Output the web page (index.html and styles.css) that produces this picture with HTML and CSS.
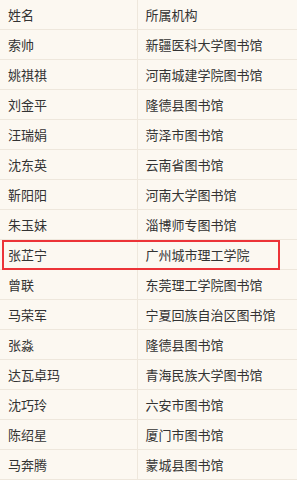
FILE: index.html
```html
<!DOCTYPE html>
<html lang="zh-CN">
<head>
    <meta charset="UTF-8">
    <meta name="viewport" content="width=device-width, initial-scale=1.0">
    <title>名单</title>
    <link rel="stylesheet" href="styles.css">
</head>
<body>
    <div class="list-wrap">
        <table class="list">
            <tr><td class="name">姓名</td><td>所属机构</td></tr>
            <tr><td class="name">索帅</td><td>新疆医科大学图书馆</td></tr>
            <tr><td class="name">姚祺祺</td><td>河南城建学院图书馆</td></tr>
            <tr><td class="name">刘金平</td><td>隆德县图书馆</td></tr>
            <tr><td class="name">汪瑞娟</td><td>菏泽市图书馆</td></tr>
            <tr><td class="name">沈东英</td><td>云南省图书馆</td></tr>
            <tr><td class="name">靳阳阳</td><td>河南大学图书馆</td></tr>
            <tr><td class="name">朱玉妹</td><td>淄博师专图书馆</td></tr>
            <tr><td class="name">张芷宁</td><td>广州城市理工学院</td></tr>
            <tr><td class="name">曾联</td><td>东莞理工学院图书馆</td></tr>
            <tr><td class="name">马荣军</td><td>宁夏回族自治区图书馆</td></tr>
            <tr><td class="name">张淼</td><td>隆德县图书馆</td></tr>
            <tr><td class="name">达瓦卓玛</td><td>青海民族大学图书馆</td></tr>
            <tr><td class="name">沈巧玲</td><td>六安市图书馆</td></tr>
            <tr><td class="name">陈绍星</td><td>厦门市图书馆</td></tr>
            <tr><td class="name">马奔腾</td><td>蒙城县图书馆</td></tr>
        </table>
        <!-- red frame around the highlighted row -->
        <div class="mark"></div>
    </div>
</body>
</html>
```

FILE: styles.css
```css
body {
    margin: 0;
    padding: 0;
    background-color: #fcf8f1;
    font-family: "Noto Sans CJK SC", "Noto Sans", sans-serif;
    color: #333;
}
.list-wrap {
    position: relative;
}
.list {
    width: 100%;
    border-collapse: collapse;
    font-size: 13px;
}
.list td {
    height: 29px;
    padding: 0 8px;
    border-bottom: 1px solid #eee7dc;
    box-sizing: border-box;
    line-height: 29px;
    vertical-align: middle;
    white-space: nowrap;
}
.list td.name {
    width: 137px;
    border-right: 1px solid #eee7dc;
}
.mark {
    position: absolute;
    top: 240px;
    left: 2px;
    width: 278px;
    height: 30px;
    border: 2px solid #ec3338;
    box-sizing: border-box;
}
```
